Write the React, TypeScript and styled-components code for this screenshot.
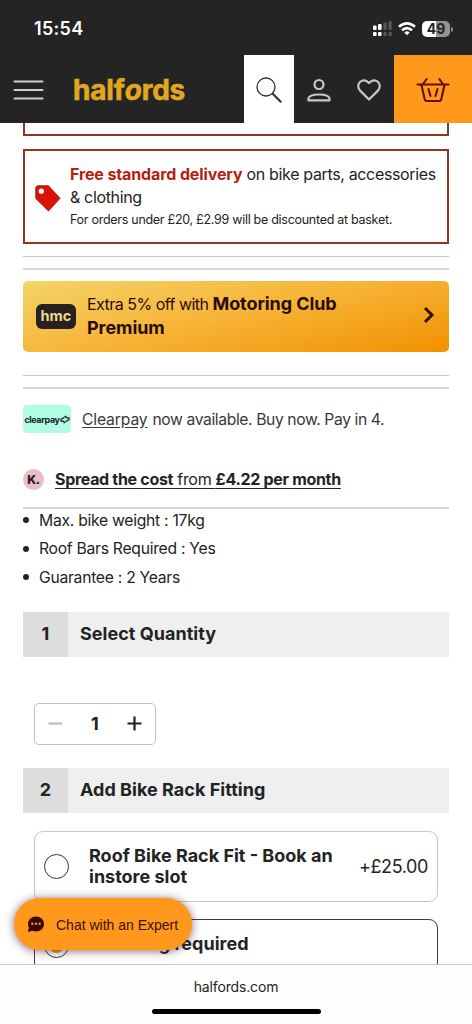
import React from "react";
import styled, { createGlobalStyle } from "styled-components";

const Global = createGlobalStyle`
  * { box-sizing: border-box; }
  body { margin: 0; background: #fff; color: #232323; font-family: Inter, "Liberation Sans", sans-serif; }
  button { font: inherit; color: inherit; border: 0; background: none; padding: 0; }
`;

const Phone = styled.div`
  position: relative;
  width: 472px;
  height: 1024px;
  display: flex;
  flex-direction: column;
  overflow: hidden;
  background: #fff;
`;

const StatusBar = styled.div`
  height: 55px;
  flex: none;
  display: flex;
  align-items: center;
  justify-content: space-between;
  padding: 2px 22px 0 34px;
  background: #242424;
  color: #fff;
`;

const Clock = styled.span`
  font-size: 18px;
  font-weight: 600;
  letter-spacing: 0.3px;
`;

const StatusIcons = styled.div`
  display: flex;
  align-items: center;
  gap: 6px;
`;

const Battery = styled.div`
  position: relative;
  width: 28px;
  height: 16px;
  border-radius: 5px;
  background: linear-gradient(90deg, #fff 50%, #949494 50%);
  color: #242424;
  font-size: 14px;
  line-height: 16px;
  font-weight: 700;
  text-align: center;
  &::after {
    content: "";
    position: absolute;
    right: -3px;
    top: 6px;
    width: 2px;
    height: 5px;
    border-radius: 0 2px 2px 0;
    background: #8a8a8a;
  }
`;

const Header = styled.header`
  height: 68px;
  flex: none;
  display: flex;
  background: #242424;
`;

const MenuButton = styled.button`
  width: 73px;
  padding-left: 13px;
  display: flex;
  align-items: center;
  padding-top: 1px;
`;

const Logo = styled.div`
  flex: 1;
  padding-top: 18px;
  color: #e0a820;
  font-size: 28px;
  line-height: 34px;
  font-weight: 700;
  letter-spacing: -0.2px;
  -webkit-text-stroke: 0.6px #e0a820;
  em { font-style: italic; }
`;

const HeaderButton = styled.button<{ $bg?: string; $width?: number }>`
  width: ${(p) => p.$width ?? 50}px;
  background: ${(p) => p.$bg ?? "transparent"};
  display: flex;
  align-items: center;
  justify-content: center;
  && { padding-top: 2px; }
`;

const Content = styled.main`
  height: 841px;
  flex: none;
  overflow: hidden;
  padding: 0 23px;
`;

const PreviousOffer = styled.div`
  height: 13px;
  border: 2px solid #93381f;
  border-top: 0;
`;

const Offer = styled.section`
  height: 95px;
  margin-top: 13px;
  border: 2px solid #93381f;
  display: flex;
  align-items: center;
  padding: 0 0 0 10px;
  gap: 9px;
  svg { margin-top: 4px; }
`;

const OfferText = styled.div`
  padding-bottom: 1px;
  font-size: 16px;
  line-height: 23px;
  letter-spacing: -0.35px;
  white-space: nowrap;
  b { font-weight: 700; color: #b71d12; letter-spacing: -0.12px; }
  small { display: block; font-size: 12.5px; line-height: 21px; letter-spacing: -0.28px; }
`;

const Rule = styled.hr<{ $gap: number; $thick?: boolean }>`
  height: ${(p) => (p.$thick ? 2 : 1)}px;
  margin: ${(p) => p.$gap}px 0 0;
  border: 0;
  background: ${(p) => (p.$thick ? "#d8d8d8" : "#c8c8c8")};
`;

const Banner = styled.section`
  height: 71px;
  margin-top: 11px;
  border-radius: 5px;
  display: flex;
  align-items: center;
  padding: 0 14px 0 13px;
  background: linear-gradient(167deg, #f3d467 0%, #f7b63a 45%, #f29100 100%);
  color: #290b08;
`;

const ClubBadge = styled.div`
  width: 40px;
  height: 25px;
  border-radius: 6px;
  margin-right: 11px;
  background: #292021;
  color: #efd98a;
  font-size: 14.5px;
  line-height: 24px;
  font-weight: 700;
  text-align: center;
`;

const BannerText = styled.div`
  flex: 1;
  padding-bottom: 1px;
  font-size: 16px;
  line-height: 24px;
  letter-spacing: -0.52px;
  b { font-size: 18px; letter-spacing: -0.08px; }
`;

const ChevronIcon = styled.svg`
  margin-bottom: 3px;
`;

const Clearpay = styled.div`
  height: 28px;
  margin-top: 16px;
  display: flex;
  align-items: center;
  gap: 11px;
  font-size: 15.7px;
  letter-spacing: -0.4px;
  color: #383838;
  u { text-underline-offset: 2px; margin-right: 1px; letter-spacing: -0.15px; }
`;

const ClearpayBadge = styled.div`
  width: 48px;
  height: 28px;
  border-radius: 4px;
  display: flex;
  align-items: center;
  justify-content: center;
  background: #b2fce4;
  color: #13251f;
  font-size: 9px;
  font-weight: 700;
  letter-spacing: -0.4px;
`;

const Finance = styled.div`
  height: 24px;
  margin-top: 34px;
  display: flex;
  align-items: center;
  gap: 11px;
  font-size: 16px;
  letter-spacing: -0.31px;
  u { text-underline-offset: 3px; }
`;

const KlarnaBadge = styled.div`
  width: 21px;
  height: 21px;
  border-radius: 50%;
  background: #e6c0c4;
  color: #241a1c;
  font-size: 12px;
  line-height: 21px;
  font-weight: 800;
  text-align: center;
`;

const Features = styled.ul`
  list-style: none;
  margin: -3px 0 0;
  padding: 0;
`;

const Feature = styled.li`
  height: 28.5px;
  display: flex;
  align-items: center;
  font-size: 15.7px;
  letter-spacing: -0.27px;
  &::before {
    content: "";
    width: 6px;
    height: 6px;
    margin-right: 10px;
    border-radius: 50%;
    background: #232323;
  }
`;

const Step = styled.h2<{ $gap: number }>`
  height: 45px;
  margin: ${(p) => p.$gap}px 0 0;
  display: flex;
  align-items: flex-start;
  background: #efefef;
  font-size: 18px;
  line-height: 43px;
  font-weight: 700;
  letter-spacing: 0.03px;
`;

const StepNumber = styled.span`
  width: 45px;
  height: 45px;
  margin-right: 12px;
  background: #ddd;
  text-align: center;
`;

const Quantity = styled.div`
  width: 122px;
  height: 42px;
  margin: 46px 0 0 11px;
  padding: 0 13px;
  border: 1px solid #c0c0c0;
  border-radius: 5px;
  display: flex;
  align-items: center;
  justify-content: space-between;
  font-size: 18px;
  font-weight: 700;
`;

const Choice = styled.div<{ $selected?: boolean }>`
  width: 404px;
  height: 71px;
  margin: 18px 0 0 11px;
  padding: 0 9px 0 9px;
  border: 1px solid ${(p) => (p.$selected ? "#3b3b3b" : "#c6c6c6")};
  border-radius: 9px;
  display: flex;
  align-items: ${(p) => (p.$selected ? "flex-start" : "center")};
  & + & { margin-top: 17px; }
`;

const Radio = styled.span<{ $selected?: boolean }>`
  width: 25px;
  height: 25px;
  flex: none;
  margin: ${(p) => (p.$selected ? "13px" : "0")} 20px 0 0;
  border: 1px solid #333;
  border-radius: 50%;
  display: flex;
  align-items: center;
  justify-content: center;
  &::after {
    content: "";
    width: 15px;
    height: 15px;
    border-radius: 50%;
    background: ${(p) => (p.$selected ? "#e0a020" : "transparent")};
  }
`;

const ChoiceLabel = styled.div<{ $top?: number }>`
  flex: 1;
  margin-top: ${(p) => p.$top ?? 0}px;
  font-size: 18px;
  line-height: 21px;
  font-weight: 700;
  letter-spacing: 0;
  white-space: nowrap;
`;

const Price = styled.span`
  font-size: 18px;
  letter-spacing: -0.4px;
`;

const ChatButton = styled.button`
  && {
    position: absolute;
    z-index: 2;
    left: 14px;
    top: 898px;
    width: 178px;
    height: 52px;
    border-radius: 26px;
    padding: 1px 0 0 13px;
    display: flex;
    align-items: center;
    gap: 11px;
    background: #ff981b;
    color: #3c0f08;
    font-family: "Liberation Sans", Arial, sans-serif;
    font-size: 14px;
    box-shadow: 0 1px 10px rgba(70, 20, 40, 0.65);
    white-space: nowrap;
  }
`;

const BrowserBar = styled.footer`
  flex: 1;
  border-top: 1px solid #c9c9c9;
  background: #fdfdfd;
  display: flex;
  flex-direction: column;
  align-items: center;
  justify-content: space-between;
  padding: 12px 0 10px;
  font-size: 14px;
  line-height: 19px;
  letter-spacing: -0.15px;
`;

const HomeIndicator = styled.div`
  width: 169px;
  height: 5px;
  border-radius: 3px;
  background: #000;
`;

function SignalIcon() {
  return (
    <svg width="19" height="15" viewBox="0 0 19 15" fill="#fff">
      <rect x="0" y="4.5" width="3.6" height="4.5" rx="1" />
      <rect x="5" y="3" width="3.6" height="6" rx="1" />
      <rect x="10.3" y="1.5" width="3.4" height="7.5" rx="1" fill="#555" />
      <rect x="15.4" y="0" width="3.4" height="9" rx="1" fill="#555" />
      <rect x="0" y="11" width="3.6" height="4" rx="1" />
      <rect x="5" y="11" width="3.6" height="4" rx="1" />
      <rect x="10.3" y="11" width="3.4" height="4" rx="1" fill="#555" />
      <rect x="15.4" y="11" width="3.4" height="4" rx="1" fill="#555" />
    </svg>
  );
}

function WifiIcon() {
  return (
    <svg width="18" height="14" viewBox="0 0 18 14" fill="none" stroke="#fff" strokeWidth="2.6">
      <path d="M1 4.8Q9-2 17 4.8" />
      <path d="M4 8.2Q9 3.9 14 8.2" />
      <path d="M6.3 10.4Q9 8 11.7 10.4L9 13.2Z" fill="#fff" stroke="none" />
    </svg>
  );
}

function BasketIcon() {
  return (
    <svg width="34" height="26" viewBox="0 0 34 26" fill="none" stroke="#5f1009" strokeWidth="2.1" strokeLinecap="round" strokeLinejoin="round">
      <path d="M1.5 7.500h31M5.500 8l3.200 14.200Q9 24 10.800 24h12.400q1.800 0 2.100-1.800L28.500 8M7 7l3.700-5M27 7l-3.700-5M12.500 12l2 7M21.500 12l-2 7" />
    </svg>
  );
}

export default function App() {
  return (
    <>
      <Global />
      <Phone>
        <StatusBar>
          <Clock>15:54</Clock>
          <StatusIcons>
            <SignalIcon />
            <WifiIcon />
            <Battery>49</Battery>
          </StatusIcons>
        </StatusBar>
        <Header>
          <MenuButton aria-label="Menu">
            <svg width="31" height="20" viewBox="0 0 31 20" stroke="#d0d0d0" strokeWidth="2" strokeLinecap="round">
              <path d="M1.5 1.5h28M1.5 10h28M1.5 18.5h28" />
            </svg>
          </MenuButton>
          <Logo>half<em>o</em>rds</Logo>
          <HeaderButton $bg="#fff" aria-label="Search">
            <svg width="26" height="26" viewBox="0 0 26 26" fill="none" stroke="#303030" strokeWidth="1.3" strokeLinecap="round">
              <circle cx="10" cy="10" r="9" />
              <path d="m16.7 16.7 8 8" strokeWidth="2" />
            </svg>
          </HeaderButton>
          <HeaderButton aria-label="Account">
            <svg width="24" height="24" viewBox="0 0 24 24" fill="none" stroke="#c8c8c8" strokeWidth="2.2" strokeLinejoin="round">
              <circle cx="12" cy="6.500" r="4.500" />
              <path d="M1.400 22.300v-1.200c0-3 4.800-4.600 10.600-4.600s10.600 1.600 10.600 4.600v1.200Z" />
            </svg>
          </HeaderButton>
          <HeaderButton aria-label="Wishlist">
            <svg width="24" height="22" viewBox="0 0 24 22" fill="none" stroke="#c8c8c8" strokeWidth="2.200" strokeLinejoin="round">
              <path d="M12 20.500 3.100 11.600C-2.700 5 6.300-2.900 12 4c5.700-6.900 14.700 1 8.900 7.600Z" />
            </svg>
          </HeaderButton>
          <HeaderButton $bg="#ff981b" $width={78} aria-label="Basket">
            <BasketIcon />
          </HeaderButton>
        </Header>

        <Content>
          <PreviousOffer />
          <Offer>
            <svg width="26" height="27" viewBox="0 0 26 27">
              <path d="M3 .8h10.500L25 13.300 13.500 26 .8 13.500V3Q.8.8 3 .8Z" fill="#dc1208" stroke="#9b2612" strokeWidth="1" strokeLinejoin="round" />
              <circle cx="6.300" cy="6.200" r="2.600" fill="#fff" />
            </svg>
            <OfferText>
              <b>Free standard delivery</b> on bike parts, accessories
              <br />
              &amp; clothing
              <small>For orders under £20, £2.99 will be discounted at basket.</small>
            </OfferText>
          </Offer>
          <Rule $gap={12} />
          <Rule $gap={11} $thick />
          <Banner>
            <ClubBadge>hmc</ClubBadge>
            <BannerText>
              Extra 5% off with <b>Motoring Club<br />Premium</b>
            </BannerText>
            <ChevronIcon width="12" height="18" viewBox="0 0 12 18" fill="none" stroke="#30100a" strokeWidth="3">
              <path d="m2 2 7 7-7 7" />
            </ChevronIcon>
          </Banner>
          <Rule $gap={23} />
          <Rule $gap={11} $thick />
          <Clearpay>
            <ClearpayBadge>
              clearpay
              <svg width="10" height="9" viewBox="0 0 10 9" fill="none" stroke="#13251f" strokeWidth="1.3" strokeLinejoin="round">
                <path d="M4.500 6.300 1 6V4.200L4 2.600M3.500 7.800l2.200-1M5.500 2.600 9 3v1.800L6 6.400M6.500 1.200l-2.200 1" />
              </svg>
            </ClearpayBadge>
            <span><u>Clearpay</u> now available. Buy now. Pay in 4.</span>
          </Clearpay>
          <Finance>
            <KlarnaBadge>K.</KlarnaBadge>
            <u><b>Spread the cost</b> from <b>£4.22 per month</b></u>
          </Finance>
          <Rule $gap={16} $thick />
          <Features>
            <Feature>Max. bike weight : 17kg</Feature>
            <Feature>Roof Bars Required : Yes</Feature>
            <Feature>Guarantee : 2 Years</Feature>
          </Features>
          <Step $gap={20}><StepNumber>1</StepNumber>Select Quantity</Step>
          <Quantity>
            <svg width="15" height="15" viewBox="0 0 15 15" stroke="#c4c4c4" strokeWidth="2.500"><path d="M.5 7.500h14" /></svg>
            <span>1</span>
            <svg width="15" height="15" viewBox="0 0 15 15" stroke="#202020" strokeWidth="2.200"><path d="M.5 7.500h14M7.500.5v14" /></svg>
          </Quantity>
          <Step $gap={23}><StepNumber>2</StepNumber>Add Bike Rack Fitting</Step>
          <Choice>
            <Radio />
            <ChoiceLabel>Roof Bike Rack Fit - Book an<br />instore slot</ChoiceLabel>
            <Price>+£25.00</Price>
          </Choice>
          <Choice $selected>
            <Radio $selected />
            <ChoiceLabel $top={13}>No fitting required</ChoiceLabel>
          </Choice>
        </Content>

        <BrowserBar>
          <span>halfords.com</span>
          <HomeIndicator />
        </BrowserBar>

        <ChatButton>
          <svg width="18" height="17" viewBox="0 0 18 17">
            <path d="M9 .5c4.600 0 8 3.300 8 7.500s-3.400 7.500-8 7.500q-1.800 0-3.500-.7L1 16l.8-4.500C-1 6 3.500.5 9 .5Z" fill="#3c0703" />
            <circle cx="5.300" cy="7.800" r="1.200" fill="#ff981b" />
            <circle cx="9" cy="7.800" r="1.200" fill="#ff981b" />
            <circle cx="12.700" cy="7.800" r="1.200" fill="#ff981b" />
          </svg>
          Chat with an Expert
        </ChatButton>
      </Phone>
    </>
  );
}
